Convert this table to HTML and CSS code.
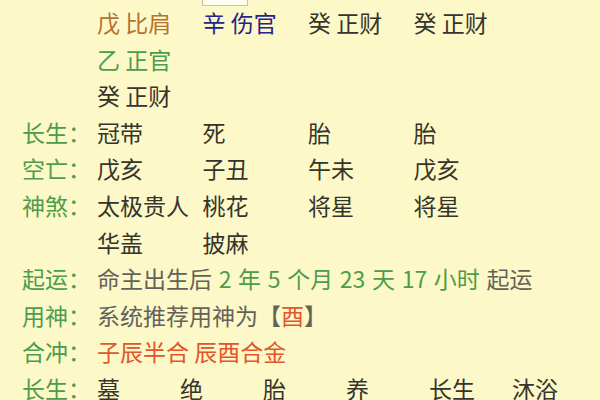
FILE: index.html
```html
<!DOCTYPE html>
<html lang="zh">
<head>
<meta charset="utf-8">
<link rel="stylesheet" href="styles.css">
</head>
<body>
<div class="page">
  <div class="tab"></div>
  <div class="row"><span class="label"></span><span class="cell c-orange">戊 比肩</span><span class="cell c-blue">辛 伤官</span><span class="cell">癸 正财</span><span class="cell">癸 正财</span></div>
  <div class="row"><span class="label"></span><span class="cell c-green">乙 正官</span></div>
  <div class="row"><span class="label"></span><span class="cell">癸 正财</span></div>
  <div class="row"><span class="label">长生：</span><span class="cell">冠带</span><span class="cell">死</span><span class="cell">胎</span><span class="cell">胎</span></div>
  <div class="row"><span class="label">空亡：</span><span class="cell">戊亥</span><span class="cell">子丑</span><span class="cell">午未</span><span class="cell">戊亥</span></div>
  <div class="row"><span class="label">神煞：</span><span class="cell">太极贵人</span><span class="cell">桃花</span><span class="cell">将星</span><span class="cell">将星</span></div>
  <div class="row"><span class="label"></span><span class="cell">华盖</span><span class="cell">披麻</span></div>
  <div class="row"><span class="label">起运：</span><span class="wide spaced c-grey">命主出生后 <span class="c-green">2 年 5 个月 23 天 17 小时</span> 起运</span></div>
  <div class="row"><span class="label">用神：</span><span class="wide c-grey">系统推荐用神为【<span class="c-red">酉</span>】</span></div>
  <div class="row"><span class="label">合冲：</span><span class="wide c-red">子辰半合 辰酉合金</span></div>
  <div class="row six"><span class="label">长生：</span><span class="cell">墓</span><span class="cell">绝</span><span class="cell">胎</span><span class="cell">养</span><span class="cell">长生</span><span class="cell">沐浴</span></div>
</div>
</body>
</html>
```
FILE: styles.css
```css
html, body {
  margin: 0;
  padding: 0;
  background: #fdf8c7;
}
body {
  width: 600px;
  height: 400px;
  overflow: hidden;
  font-family: "Noto Sans CJK SC", "Noto Sans", sans-serif;
  font-size: 23px;
  color: #35342d;
}
.page {
  position: relative;
  padding: 4px 0 0 22px;
}
.tab {
  position: absolute;
  left: 202px;
  top: -2px;
  width: 44px;
  height: 6px;
  border: 1px solid #c4c2b4;
  background: #fffdf0;
}
.row {
  display: flex;
  height: 36.6px;
  line-height: 36.6px;
  white-space: nowrap;
}
.label {
  width: 75px;
  flex: none;
  color: #4c9c4c;
}
.cell {
  width: 105.5px;
  flex: none;
}
.six .cell {
  width: 83px;
}
.wide {
  flex: none;
}
.spaced {
  word-spacing: 1.5px;
}
.c-orange { color: #b5722f; }
.c-blue { color: #23258a; }
.c-green { color: #4c9c4c; }
.c-grey { color: #62625a; }
.c-red { color: #e2552b; }
```
